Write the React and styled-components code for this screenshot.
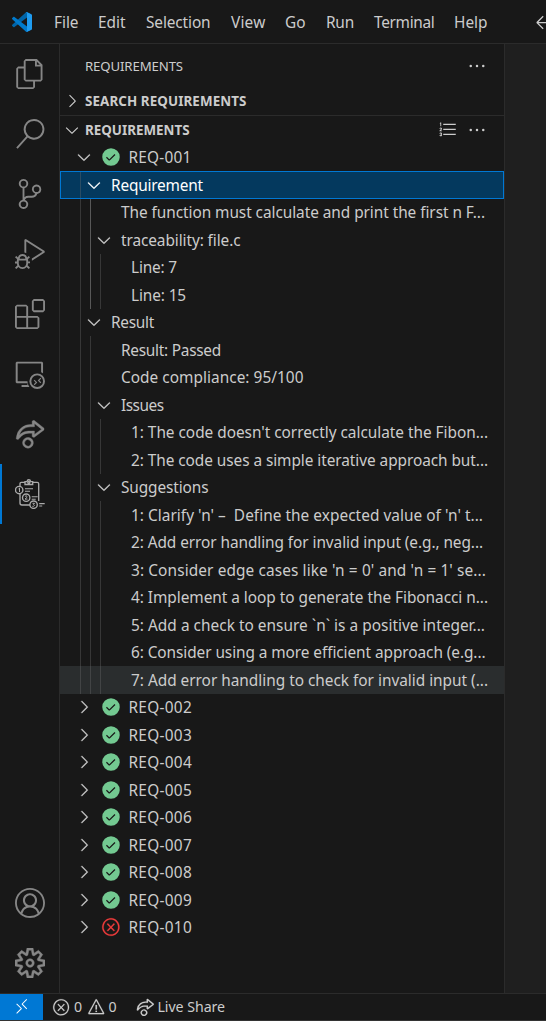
import React, { useLayoutEffect, useRef } from "react";
import styled, { createGlobalStyle, css } from "styled-components";
import {
  VscFiles,
  VscSearch,
  VscSourceControl,
  VscDebugAlt,
  VscExtensions,
  VscRemoteExplorer,
  VscLiveShare,
  VscAccount,
  VscSettingsGear,
  VscRemote,
  VscError,
  VscWarning,
  VscListOrdered,
  VscEllipsis,
  VscChevronDown,
  VscChevronRight,
  VscPassFilled,
  VscArrowLeft,
} from "react-icons/vsc";

const color = {
  bg: "#181818",
  editor: "#1f1f1f",
  border: "#2b2b2b",
  text: "#cccccc",
  muted: "#868686",
  accent: "#0078d4",
  selected: "#04395e",
  hover: "#2a2d2e",
  pass: "#73c991",
  fail: "#f13c3c",
};

const GlobalStyle = createGlobalStyle`
  * { box-sizing: border-box; }
  body {
    margin: 0;
    overflow: hidden;
    background: ${color.bg};
    color: ${color.text};
    font-family: "Noto Sans", "Open Sans", sans-serif;
    font-size: 15.4px;
  }
  svg { display: block; flex: none; }
`;

const Window = styled.div`
  display: flex;
  flex-direction: column;
  width: 546px;
  height: 1021px;
  overflow: hidden;
`;

const TitleBar = styled.header`
  display: flex;
  align-items: center;
  height: 44px;
  flex: none;
  border-bottom: 1px solid ${color.border};
  overflow: hidden;
`;

const LogoBox = styled.div`
  width: 54px;
  padding-left: 12px;
  flex: none;
`;

const MenuItem = styled.div`
  width: ${(p) => p.$w}px;
  flex: none;
  padding-top: 3px;
`;

const Body = styled.div`
  display: flex;
  height: 949px;
  flex: none;
`;

const ActivityBar = styled.nav`
  display: flex;
  flex-direction: column;
  justify-content: space-between;
  width: 60px;
  flex: none;
  border-right: 1px solid ${color.border};
  color: ${color.muted};
`;

const ActivityItem = styled.div`
  display: flex;
  align-items: center;
  justify-content: center;
  height: 60px;
  font-size: 30px;
  ${(p) => p.$heavy && css`
    svg { stroke: currentColor; stroke-width: ${p.$heavy}; }
  `}
  ${(p) => p.$active && css`
    box-shadow: inset 2px 0 0 ${color.accent};
    color: #aaaaaa;
  `}
`;

const SideBar = styled.aside`
  width: 445px;
  flex: none;
  border-right: 1px solid ${color.border};
`;

const Editor = styled.main`
  flex: 1;
  background: ${color.editor};
`;

const ViewTitle = styled.div`
  display: flex;
  align-items: center;
  height: 43.5px;
  padding: 0 17.5px 0 25px;
  font-size: 13.2px;
`;

const SectionHeader = styled.div`
  display: flex;
  align-items: center;
  height: ${(p) => p.$h}px;
  padding: 0 17.5px 0 2px;
  font-size: 13.4px;
  font-weight: 700;
  border-top: ${(p) => (p.$divided ? `1px solid ${color.border}` : "0")};
  svg { margin-right: 3px; }
`;

const Actions = styled.div`
  display: flex;
  gap: 10px;
  margin-left: auto;
  font-size: 20px;
  svg { margin: 0; }
`;

const TreeRow = styled.div`
  display: flex;
  align-items: center;
  height: 27.5px;
  padding-left: 20px;
  ${(p) => p.$state === "hover" && css`background: ${color.hover};`}
  ${(p) => p.$state === "selected" && css`
    background: ${color.selected};
    color: #fff;
    outline: 1px solid ${color.accent};
    outline-offset: -1px;
  `}
`;

const Guide = styled.i`
  width: 10px;
  align-self: stretch;
  flex: none;
  border-left: 1px solid ${(p) => (p.$bright ? "#585858" : "rgba(110,110,110,0.36)")};
`;

const Twistie = styled.span`
  width: 20px;
  height: 20px;
  margin: 0 7px 0 -6px;
  flex: none;
  font-size: 20px;
  svg { stroke: currentColor; stroke-width: 0.2; }
`;

const StatusIcon = styled.span`
  margin-right: 7.5px;
  font-size: 20px;
  color: ${(p) => p.$color};
`;

const RowText = styled.div`
  padding-top: 2px;
`;

const StatusBar = styled.footer`
  display: flex;
  align-items: center;
  height: 28px;
  flex: none;
  border-top: 1px solid ${color.border};
  border-bottom: 1px solid #333;
  font-size: 14.2px;
`;

const RemoteButton = styled.div`
  display: flex;
  align-items: center;
  justify-content: center;
  width: 43px;
  height: 26px;
  margin-right: 9px;
  background: ${color.accent};
  color: #fff;
  font-size: 17.5px;
`;

const StatusItem = styled.div`
  display: flex;
  align-items: center;
  gap: ${(p) => p.$gap}px;
  margin-right: ${(p) => p.$after}px;
  svg { font-size: 18.500px; stroke: currentColor; stroke-width: 0.15; }
`;

const TextRun = styled.span`
  display: inline-block;
  vertical-align: top;
  white-space: pre;
  line-height: 22px;
`;

// Tracks the text so that a label fills the width it is given.
function Label({ w, children }) {
  const ref = useRef(null);
  useLayoutEffect(() => {
    const el = ref.current;
    el.style.letterSpacing = "0px";
    const natural = el.getBoundingClientRect().width;
    el.style.letterSpacing = `${(w - natural) / el.textContent.length}px`;
  }, [w, children]);
  return <TextRun ref={ref}>{children}</TextRun>;
}

function VsCodeLogo() {
  return (
    <svg width="20" height="20" viewBox="0 0 100 100">
      <path fill="#0065a9" d="M96.5 10.8 75.9.9c-2.4-1.2-5.2-.7-7.1 1.2L1.3 63.6c-1.8 1.7-1.8 4.5 0 6.2l5.500 5c1.500 1.400 3.700 1.500 5.400.2L93.500 13.400c2.700-2.100 6.600-.1 6.600 3.300v-.2c0-2.400-1.400-4.600-3.600-5.700z" />
      <path fill="#007acc" d="m96.500 89.200-20.600 9.900c-2.400 1.200-5.200.7-7.100-1.200L1.300 36.400c-1.800-1.700-1.800-4.500 0-6.200l5.500-5c1.500-1.400 3.700-1.500 5.400-.2l81.300 61.600c2.700 2.100 6.600.1 6.600-3.300v.2c0 2.400-1.400 4.600-3.600 5.700z" />
      <path fill="#1f9cf0" d="M75.900 99.100c-2.400 1.200-5.200.7-7.100-1.200 2.300 2.300 6.200.7 6.200-2.600V4.700c0-3.300-3.900-4.900-6.200-2.600 1.900-1.900 4.700-2.400 7.100-1.200l20.600 9.900c2.200 1 3.500 3.200 3.500 5.600v67.200c0 2.400-1.400 4.600-3.500 5.600z" />
    </svg>
  );
}

function ChecklistIcon() {
  return (
    <svg width="30" height="30" viewBox="0 0 30 30" fill="none" stroke="currentColor" strokeWidth="1.35">
      <path d="M5 7V4.500Q5 3.300 6.300 3.300H10M17.500 3.300h4.700q1.500 0 1.500 1.500V22M5 15v9q0 2 2 2h8" />
      <path d="M10 5.500V2.600h2Q12.300.7 13.800.7T15.700 2.600h2v2.900z" />
      <circle cx="13.800" cy="3.500" r="1" />
      <circle cx="4.200" cy="11" r="3.700" />
      <circle cx="11.200" cy="18.700" r="3.700" />
      <circle cx="18.600" cy="25.700" r="3.700" />
      <path d="M3.600 9.800 4.500 9v4M10 17.400q1.600-1.100 2 0T10 20.100h2.500M17.500 24.300h2l-1 1.300q2 .8 0 1.700h-1.200" strokeWidth="1" />
      <path d="M10 9.700h8M10 12.200h5M16.700 17.700h6M16.700 20.200h4M24.200 24.600h5.500M24.200 27h3" strokeWidth="1.1" />
    </svg>
  );
}

const menu = [
  ["File", 44, 24.5],
  ["Edit", 48, 27.5],
  ["Selection", 85, 64.5],
  ["View", 54, 34.5],
  ["Go", 41, 20.5],
  ["Run", 48, 28],
  ["Terminal", 80, 60.5],
  ["Help", 79.5, 33.5],
];

const activities = [
  [VscFiles],
  [VscSearch],
  [VscSourceControl],
  [VscDebugAlt],
  [VscExtensions],
  [VscRemoteExplorer],
  [VscLiveShare, 0.3],
];

const tree = [
  { t: "REQ-001", w: 63, d: 0, open: true, status: "pass" },
  { t: "Requirement", w: 92, d: 1, open: true, state: "selected" },
  { t: "The function must calculate and print the first n F...", w: 364, d: 2, bright: true },
  { t: "traceability: file.c", w: 119.5, d: 2, open: true, bright: true },
  { t: "Line: 7", w: 46, d: 3, bright: true },
  { t: "Line: 15", w: 55, d: 3, bright: true },
  { t: "Result", w: 43, d: 1, open: true },
  { t: "Result: Passed", w: 100, d: 2 },
  { t: "Code compliance: 95/100", w: 182.5, d: 2 },
  { t: "Issues", w: 42.5, d: 2, open: true },
  { t: "1: The code doesn't correctly calculate the Fibon...", w: 357, d: 3 },
  { t: "2: The code uses a simple iterative approach but...", w: 357, d: 3 },
  { t: "Suggestions", w: 87.5, d: 2, open: true },
  { t: "1: Clarify 'n' –  Define the expected value of 'n' t...", w: 352, d: 3 },
  { t: "2: Add error handling for invalid input (e.g., neg...", w: 352, d: 3 },
  { t: "3: Consider edge cases like 'n = 0' and 'n = 1' se...", w: 355, d: 3 },
  { t: "4: Implement a loop to generate the Fibonacci n...", w: 357, d: 3 },
  { t: "5: Add a check to ensure `n` is a positive integer...", w: 354, d: 3 },
  { t: "6: Consider using a more efficient approach (e.g...", w: 354.5, d: 3 },
  { t: "7: Add error handling to check for invalid input (...", w: 357, d: 3, state: "hover" },
  ...["002", "003", "004", "005", "006", "007", "008", "009"].map((n) => ({
    t: `REQ-${n}`, w: 63.5, d: 0, open: false, status: "pass",
  })),
  { t: "REQ-010", w: 63.5, d: 0, open: false, status: "fail" },
];

function Row({ item }) {
  const expandable = item.open !== undefined;
  return (
    <TreeRow $state={item.state}>
      {Array.from({ length: item.d }, (_, i) => (
        <Guide key={i} $bright={item.bright && i === 1} />
      ))}
      <Twistie>{expandable && (item.open ? <VscChevronDown /> : <VscChevronRight />)}</Twistie>
      {item.status && (
        <StatusIcon $color={color[item.status]}>
          {item.status === "pass" ? <VscPassFilled /> : <VscError stroke="currentColor" strokeWidth={0.2} />}
        </StatusIcon>
      )}
      <RowText><Label w={item.w}>{item.t}</Label></RowText>
    </TreeRow>
  );
}

export default function App() {
  return (
    <Window>
      <GlobalStyle />
      <TitleBar>
        <LogoBox><VsCodeLogo /></LogoBox>
        {menu.map(([name, w, textW]) => (
          <MenuItem key={name} $w={w}><Label w={textW}>{name}</Label></MenuItem>
        ))}
        <VscArrowLeft size={20} />
      </TitleBar>
      <Body>
        <ActivityBar>
          <div>
            {activities.map(([Icon, heavy], i) => (
              <ActivityItem key={i} $heavy={heavy}><Icon /></ActivityItem>
            ))}
            <ActivityItem $active><ChecklistIcon /></ActivityItem>
          </div>
          <div>
            <ActivityItem><VscAccount /></ActivityItem>
            <ActivityItem $heavy={0.35}><VscSettingsGear /></ActivityItem>
          </div>
        </ActivityBar>
        <SideBar>
          <ViewTitle>
            <Label w={98}>REQUIREMENTS</Label>
            <Actions><VscEllipsis /></Actions>
          </ViewTitle>
          <SectionHeader $h={27.5}>
            <VscChevronRight size={20} />
            <Label w={161.5}>SEARCH REQUIREMENTS</Label>
          </SectionHeader>
          <SectionHeader $h={28.5} $divided>
            <VscChevronDown size={20} />
            <Label w={104.5}>REQUIREMENTS</Label>
            <Actions><VscListOrdered /><VscEllipsis /></Actions>
          </SectionHeader>
          {tree.map((item) => <Row key={item.t} item={item} />)}
        </SideBar>
        <Editor />
      </Body>
      <StatusBar>
        <RemoteButton><VscRemote /></RemoteButton>
        <StatusItem $gap={3.5} $after={3.5}><VscError /><Label w={9}>0</Label></StatusItem>
        <StatusItem $gap={3.5} $after={18.5}><VscWarning /><Label w={9}>0</Label></StatusItem>
        <StatusItem $gap={3} $after={0}><VscLiveShare /><Label w={67.5}>Live Share</Label></StatusItem>
      </StatusBar>
    </Window>
  );
}
